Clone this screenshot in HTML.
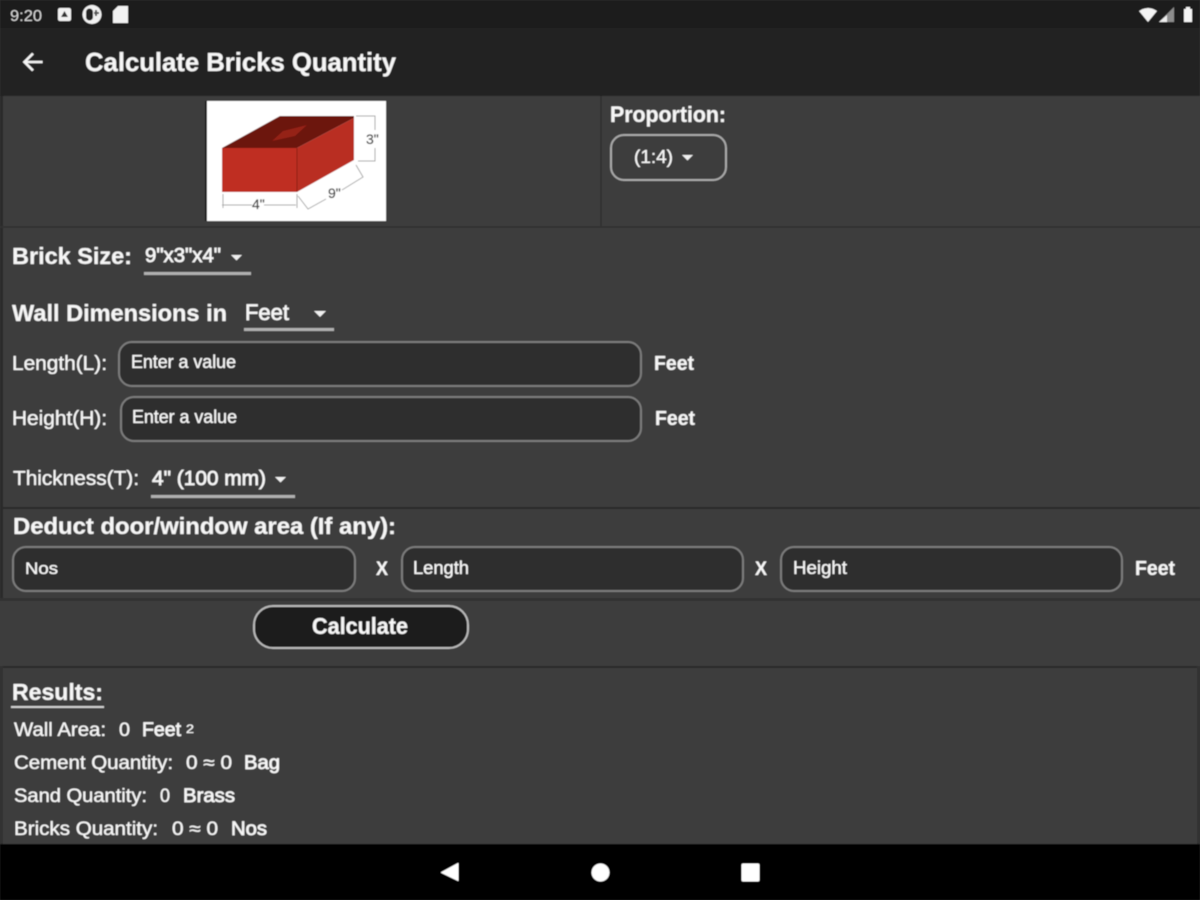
<!DOCTYPE html>
<html>
<head>
<meta charset="utf-8">
<style>
html,body{margin:0;padding:0;width:1200px;height:900px;overflow:hidden;background:#3d3d3d}
svg{display:block;position:absolute;left:0;top:0}
text{font-family:"Liberation Sans",sans-serif;fill:#f6f6f6;stroke:#f6f6f6;stroke-width:.3}
.b{font-weight:bold;stroke-width:.15}
.m{stroke-width:.65}
.f{fill:#2e2e2e;stroke:#7c7c7c;stroke-width:2}
.u{fill:#b0b0b0}
.d{fill:#2a2a2a}
.t{fill:#f0f0f0}
.dim{fill:none;stroke:#a8a8a8;stroke-width:1}
.n{fill:#444;stroke:#444;stroke-width:.2;font-size:13px}
</style>
</head>
<body>
<svg width="1200" height="900" viewBox="0 0 1200 900" xmlns="http://www.w3.org/2000/svg">
<defs><filter id="bl" x="-2%" y="-2%" width="104%" height="104%"><feGaussianBlur stdDeviation="0.55"/></filter></defs>
<g filter="url(#bl)">
<!-- backgrounds -->
<rect x="0" y="0" width="1200" height="900" fill="#3d3d3d"/>
<rect x="0" y="0" width="1200" height="28" fill="#1a1a1a"/>
<rect x="0" y="28" width="1200" height="68" fill="#212121"/>
<rect x="0" y="96" width="3" height="412" class="d"/>
<rect x="600" y="96" width="2" height="131" fill="#303030"/>
<rect x="0" y="226" width="1200" height="2" fill="#303030"/>
<rect x="0" y="507" width="1200" height="2" class="d"/>
<rect x="0" y="507" width="3" height="92" class="d"/>
<rect x="0" y="598" width="1200" height="3" fill="#303030"/>
<rect x="0" y="666" width="1200" height="2" class="d"/>
<rect x="0" y="666" width="3" height="178" fill="#303030"/>
<rect x="1197" y="666" width="3" height="178" fill="#333"/>
<rect x="0" y="844" width="1200" height="56" fill="#000"/>

<!-- status bar -->
<text x="10" y="21" font-size="16" textLength="32" lengthAdjust="spacingAndGlyphs" style="fill:#d8d8d8;stroke:none">9:20</text>
<rect x="58" y="8" width="13" height="13" rx="2" fill="#f2f2f2"/>
<path d="M61 17l3.500-6 3.500 6z" fill="#333"/>
<circle cx="92" cy="14.500" r="9.500" fill="#f2f2f2"/>
<rect x="86" y="8.500" width="7" height="12" rx="3.500" fill="#222"/>
<path d="M95 10h2v2h2v2h-2v2h-2v-2h-1v-2h1z" fill="#555"/>
<path d="M118 6h10v17h-15v-12z" fill="#f2f2f2"/>
<path d="M1139 11q9-6 18 0l-9 11z" fill="#f4f4f4"/>
<path d="M1174 7v15h-15z" fill="#8d8d8d"/>
<path d="M1167 15v7h-8z" fill="#eee"/>
<path d="M1184 9h2v-2h4v2h2v13h-8z" fill="#f4f4f4"/>

<!-- app bar -->
<path d="M42.500 62H25M33 53.500L24.500 62L33 70.500" fill="none" stroke="#f4f4f4" stroke-width="2.600"/>
<text class="b" x="85" y="71" font-size="26" textLength="311" lengthAdjust="spacingAndGlyphs">Calculate Bricks Quantity</text>

<!-- brick image -->
<rect x="205" y="101" width="2" height="120" fill="#1c1c1c"/>
<rect x="207" y="101" width="179" height="120" fill="#fff"/>
<path d="M222 148L280 116H354V118L297 148z" fill="#6c120b"/>
<path d="M272 141L283 131L307 125L295 136z" fill="#952218"/>
<rect x="222" y="148" width="75" height="44" fill="#bf2f22"/>
<path d="M297 148L354 118V160L297 192z" fill="#b92f23"/>
<path d="M297 148V192" stroke="#8f2017" stroke-width="1"/>
<path d="M356 116H375V130M375 148V161H358M223 194V208M297 194V208M222 205H252M264 205H296M298 196L308 209L326 199M342 190L363 177L356 165" class="dim"/>
<text class="n" x="366" y="144" style="font-size:14px">3"</text>
<text class="n" x="252" y="209" style="font-size:14px">4"</text>
<text class="n" x="328" y="198" style="font-size:14px">9"</text>

<!-- proportion -->
<text class="b" x="610" y="122" font-size="22" textLength="116" lengthAdjust="spacingAndGlyphs">Proportion:</text>
<rect x="611" y="135" width="115" height="45" rx="13" fill="#3c3c3c" stroke="#a8a8a8" stroke-width="2"/>
<text x="634" y="163" font-size="18" textLength="39" lengthAdjust="spacingAndGlyphs">(1:4)</text>
<path d="M682 155h11l-5.500 5.500z" class="t"/>

<!-- brick size -->
<text class="b" x="12" y="264" font-size="23" textLength="120" lengthAdjust="spacingAndGlyphs">Brick Size:</text>
<text class="m" x="145" y="262" font-size="20" textLength="76" lengthAdjust="spacingAndGlyphs">9"x3"x4"</text>
<path d="M231 255h11l-5.500 5.500z" class="t"/>
<rect x="144" y="272" width="107" height="3" class="u"/>

<!-- wall dimensions -->
<text class="b" x="12" y="321" font-size="23" textLength="215" lengthAdjust="spacingAndGlyphs">Wall Dimensions in</text>
<text class="m" x="245" y="320" font-size="22" textLength="44" lengthAdjust="spacingAndGlyphs">Feet</text>
<path d="M314 311h12l-6 6z" class="t"/>
<rect x="244" y="328" width="90" height="3" class="u"/>

<!-- length / height -->
<text x="12" y="370" font-size="20" textLength="95" lengthAdjust="spacingAndGlyphs">Length(L):</text>
<rect x="119" y="342" width="522" height="44" rx="13" class="f"/>
<text x="131" y="368" font-size="18" textLength="105" lengthAdjust="spacingAndGlyphs">Enter a value</text>
<text class="b" x="654" y="370" font-size="20" textLength="40" lengthAdjust="spacingAndGlyphs">Feet</text>
<text x="12" y="425" font-size="20" textLength="95" lengthAdjust="spacingAndGlyphs">Height(H):</text>
<rect x="121" y="397" width="520" height="44" rx="13" class="f"/>
<text x="132" y="423" font-size="18" textLength="105" lengthAdjust="spacingAndGlyphs">Enter a value</text>
<text class="b" x="655" y="425" font-size="20" textLength="40" lengthAdjust="spacingAndGlyphs">Feet</text>

<!-- thickness -->
<text x="13" y="485" font-size="20" textLength="126" lengthAdjust="spacingAndGlyphs">Thickness(T):</text>
<text class="m" x="152" y="485" font-size="20" textLength="114" lengthAdjust="spacingAndGlyphs">4" (100 mm)</text>
<path d="M275 477h11l-5.500 5.500z" class="t"/>
<rect x="151" y="495" width="144" height="3" class="u"/>

<!-- deduct -->
<text class="b" x="13" y="534" font-size="23" textLength="383" lengthAdjust="spacingAndGlyphs">Deduct door/window area (If any):</text>
<rect x="13" y="547" width="342" height="44" rx="13" class="f"/>
<text x="25" y="574" font-size="17" textLength="33" lengthAdjust="spacingAndGlyphs">Nos</text>
<text class="b" x="376" y="575" font-size="19" textLength="12" lengthAdjust="spacingAndGlyphs">X</text>
<rect x="402" y="547" width="341" height="44" rx="13" class="f"/>
<text x="413" y="574" font-size="18" textLength="56" lengthAdjust="spacingAndGlyphs">Length</text>
<text class="b" x="755" y="575" font-size="19" textLength="12" lengthAdjust="spacingAndGlyphs">X</text>
<rect x="781" y="547" width="341" height="44" rx="13" class="f"/>
<text x="793" y="574" font-size="18" textLength="54" lengthAdjust="spacingAndGlyphs">Height</text>
<text class="b" x="1135" y="575" font-size="20" textLength="40" lengthAdjust="spacingAndGlyphs">Feet</text>

<!-- calculate -->
<rect x="254" y="606" width="214" height="42" rx="19" fill="#1f1f1f" stroke="#b8b8b8" stroke-width="2"/>
<text class="b" x="312" y="634" font-size="23" textLength="96" lengthAdjust="spacingAndGlyphs">Calculate</text>

<!-- results -->
<text class="b" x="12" y="700" font-size="23" textLength="91" lengthAdjust="spacingAndGlyphs">Results:</text>
<rect x="11" y="706" width="93" height="2" fill="#d0d0d0"/>
<text x="14" y="736" font-size="19" textLength="92" lengthAdjust="spacingAndGlyphs">Wall Area:</text>
<text x="119" y="736" font-size="19" textLength="11" lengthAdjust="spacingAndGlyphs">0</text>
<text class="m" x="142" y="736" font-size="19" textLength="39" lengthAdjust="spacingAndGlyphs">Feet</text>
<text x="186" y="733" font-size="12" textLength="8" lengthAdjust="spacingAndGlyphs">2</text>
<text x="14" y="769" font-size="19" textLength="159" lengthAdjust="spacingAndGlyphs">Cement Quantity:</text>
<text x="186" y="769" font-size="19" textLength="46" lengthAdjust="spacingAndGlyphs">0 ≈ 0</text>
<text class="m" x="244" y="769" font-size="19" textLength="36" lengthAdjust="spacingAndGlyphs">Bag</text>
<text x="14" y="802" font-size="19" textLength="133" lengthAdjust="spacingAndGlyphs">Sand Quantity:</text>
<text x="160" y="802" font-size="19" textLength="10" lengthAdjust="spacingAndGlyphs">0</text>
<text class="m" x="183" y="802" font-size="19" textLength="52" lengthAdjust="spacingAndGlyphs">Brass</text>
<text x="14" y="835" font-size="19" textLength="144" lengthAdjust="spacingAndGlyphs">Bricks Quantity:</text>
<text x="172" y="835" font-size="19" textLength="46" lengthAdjust="spacingAndGlyphs">0 ≈ 0</text>
<text class="m" x="231" y="835" font-size="19" textLength="36" lengthAdjust="spacingAndGlyphs">Nos</text>

<!-- nav bar -->
<path d="M458 863.500V880.500L441.500 872.500z" fill="#fff" stroke="#fff" stroke-width="1" stroke-linejoin="round"/>
<circle cx="600.500" cy="872.500" r="9" fill="#fff"/>
<rect x="741.500" y="863.500" width="18" height="18" rx="1.500" fill="#fff"/>
</g>
</svg>
</body>
</html>
